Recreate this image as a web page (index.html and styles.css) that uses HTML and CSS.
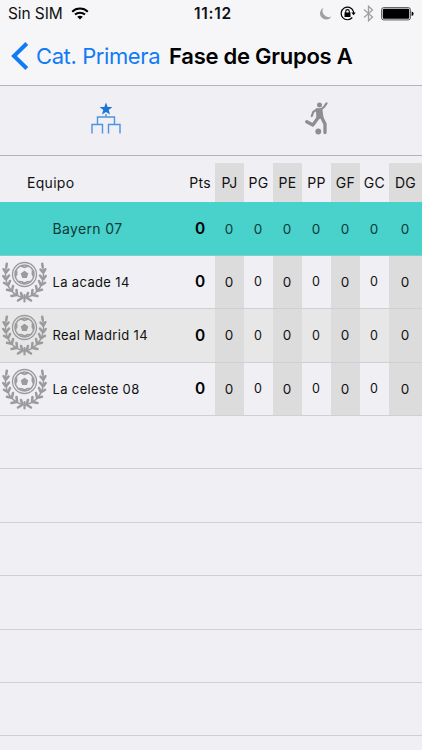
FILE: index.html
```html
<!DOCTYPE html>
<html lang="es">
<head>
    <meta charset="UTF-8">
    <meta name="viewport" content="width=device-width, initial-scale=1.0">
    <title>Fase de Grupos A</title>
    <link rel="stylesheet" href="styles.css">
</head>
<body>
    <!-- Escudo por defecto de los equipos -->
    <svg class="defs" width="0" height="0">
        <symbol id="escudo" viewBox="0 0 46 42">
            <g fill="none" stroke="#9b9b9e">
                <circle cx="22.5" cy="13.5" r="12" stroke-width="1.3"/>
                <circle cx="22.5" cy="13.5" r="9.500" stroke-width="1.6"/>
                <path d="M19 5l3.500 1.300L26 5M30.500 9.500l-.2 3.500 1.400 2.500M28.500 20.500l-3.500.2-2.500 1.500-2.500-1.500-3.500-.2M13.300 15.500l1.400-2.500-.2-3.500" stroke-width="1.600"/>
                <path d="M4.200 6C1.500 20 7 34 22.500 37C38 34 43.500 20 40.800 6" stroke-width="1.500"/>
            </g>
            <path d="M22.500 9.800l3.800 2.800-1.500 4.400h-4.600l-1.500-4.400z" fill="#9b9b9e"/>
            <g id="rama" fill="none" stroke="#9b9b9e" stroke-width="2.500" stroke-linecap="round">
                <path d="M4.300 6L4.800 2.800M3.500 11.500L1.600 8.200M4 11.500L6.500 8.500M3.500 18L1.300 15M4.300 18L7 14.500M5.500 24L2 21.800M6.300 24L8 20M9.500 29.800L5 28.800M10 29.500L11 25M14.500 34L9.500 35M15 33.500L14.500 29M20 37L16 39.500M20.300 36L19 32"/>
            </g>
            <use href="#rama" transform="matrix(-1 0 0 1 45 0)"/>
            <path d="M22.500 34v6.500" stroke="#9b9b9e" stroke-width="2.200" stroke-linecap="round"/>
        </symbol>
    </svg>

    <header class="top">
        <div class="status">
            <div class="carrier">
                <span>Sin SIM</span>
                <svg width="18" height="13" viewBox="0 0 18 13" fill="none" stroke="#000" stroke-width="2">
                    <path d="M1.200 4.700C5.500.5 12.500.5 16.800 4.700M4 7.600c2.800-2.600 7.200-2.600 10 0"/>
                    <path d="M9 12.500L6.200 9.800c1.500-1.400 4.100-1.400 5.600 0z" fill="#000" stroke="none"/>
                </svg>
            </div>
            <span class="time">11:12</span>
            <div class="indicators">
                <svg width="13" height="13" viewBox="0 0 13 13"><path d="M4.500.7A6.200 6.200 0 1 0 12.500 9.500A6.200 6.200 0 0 1 4.500.7z" fill="#a0a0a3"/></svg>
                <svg class="lock" width="16" height="15" viewBox="0 0 16 15">
                    <path d="M13.300 5A6.300 6.300 0 1 0 12.300 11.500M13.300 5l.4 2" fill="none" stroke="#000" stroke-width="1.200"/>
                    <path d="M11.300 6.500h4.400l-2.200 2.800z"/>
                    <path d="M4.500 6.500h6v4.500h-6z"/>
                    <path d="M5.700 7V5.400a1.800 1.800 0 0 1 3.600 0V7" fill="none" stroke="#000" stroke-width="1.100"/>
                </svg>
                <svg class="bluetooth" width="11" height="17" viewBox="0 0 11 17"><path d="M1 4.500l8.500 7.500-4 3.800V1.200l4 3.800L1 12.500" fill="none" stroke="#a0a0a3" stroke-width="1.300"/></svg>
                <svg class="battery" width="33" height="14" viewBox="0 0 33 14">
                    <rect x=".6" y=".6" width="28.800" height="12.300" rx="2" fill="none" stroke="#444" stroke-width=".9"/>
                    <rect x="1.800" y="1.800" width="26.400" height="9.900" rx="1"/>
                    <path d="M30.600 4.500q2 .6 2 2.300t-2 2.300z"/>
                </svg>
            </div>
        </div>
        <nav class="navbar">
            <a class="back" href="#">
                <svg width="18" height="28" viewBox="0 0 18 28"><path d="M15.800 1.500L3 14l12.800 12.500" fill="none" stroke="#117bf5" stroke-width="4"/></svg>
                <span>Cat. Primera</span>
            </a>
            <h1>Fase de Grupos A</h1>
        </nav>
    </header>

    <div class="tabs">
        <a class="tab" href="#">
            <svg width="32" height="34" viewBox="0 0 32 34">
                <path d="M16 .5l1.700 4.400 4.700.2-3.700 3 1.300 4.500-4-2.600-4 2.600 1.300-4.500-3.700-3 4.700-.2z" fill="#1b75d8"/>
                <path d="M16 12v3M7.500 22.500V15h17v7.500M2 31.500v-9h10.500v9M18.500 31.500v-9H30v9" fill="none" stroke="#4b95de" stroke-width="1.400"/>
            </svg>
        </a>
        <a class="tab" href="#">
            <svg width="24" height="34" viewBox="0 0 24 34" fill="#8e8e90">
                <circle cx="14.500" cy="3" r="2.500"/>
                <circle cx="13.300" cy="29.500" r="2.900"/>
                <path d="M10.800 6.500l6.400-.5 1.300 9.500-7 2.500z"/>
                <path d="M16.500 7l2.500-2L21.500 1.300M12 7.300L8.300 9.800 6.800 14" fill="none" stroke="#8e8e90" stroke-width="2.200" stroke-linecap="round" stroke-linejoin="round"/>
                <path d="M13.300 15.500L7.800 23 1.800 19.800M16.500 15l3.500 7v8.500" fill="none" stroke="#8e8e90" stroke-width="3.300" stroke-linecap="round" stroke-linejoin="round"/>
            </svg>
        </a>
    </div>

    <table class="standings">
        <colgroup>
            <col class="col-team">
            <col class="col-pts">
            <col class="col-stat" span="6">
            <col class="col-last">
        </colgroup>
        <thead>
            <tr><th>Equipo</th><th>Pts</th><th>PJ</th><th>PG</th><th>PE</th><th>PP</th><th>GF</th><th>GC</th><th>DG</th></tr>
        </thead>
        <tbody>
            <tr class="selected">
                <td><div class="team"><span>Bayern 07</span></div></td>
                <td>0</td><td>0</td><td>0</td><td>0</td><td>0</td><td>0</td><td>0</td><td>0</td>
            </tr>
            <tr>
                <td><div class="team"><svg class="crest"><use href="#escudo"/></svg><span>La acade 14</span></div></td>
                <td>0</td><td>0</td><td>0</td><td>0</td><td>0</td><td>0</td><td>0</td><td>0</td>
            </tr>
            <tr class="alt">
                <td><div class="team"><svg class="crest"><use href="#escudo"/></svg><span>Real Madrid 14</span></div></td>
                <td>0</td><td>0</td><td>0</td><td>0</td><td>0</td><td>0</td><td>0</td><td>0</td>
            </tr>
            <tr>
                <td><div class="team"><svg class="crest"><use href="#escudo"/></svg><span>La celeste 08</span></div></td>
                <td>0</td><td>0</td><td>0</td><td>0</td><td>0</td><td>0</td><td>0</td><td>0</td>
            </tr>
        </tbody>
    </table>

    <div class="empty-rows">
        <div></div><div></div><div></div><div></div><div></div><div></div>
    </div>
</body>
</html>
```
FILE: styles.css
```css
:root {
    --bg: #efeff4;
    --bar: #f6f6f8;
    --line: #d0d0d4;
    --blue: #117bf5;
    --teal: #49d1cc;
    --stripe: #dcdcdc;
}
* {
    box-sizing: border-box;
}
body {
    margin: 0;
    background: var(--bg);
    color: #111;
    font-family: Inter, "Liberation Sans", sans-serif;
    white-space: nowrap;
}
svg {
    display: block;
    flex: none;
}
.defs {
    position: absolute;
}
.top {
    height: 86px;
    background: var(--bar);
    border-bottom: 1px solid #b4b4b8;
}
.status {
    display: grid;
    grid-template-columns: 1fr auto 1fr;
    align-items: center;
    height: 27px;
    padding: 0 8px 0 8px;
    font-size: 15.5px;
}
.carrier {
    display: flex;
    align-items: center;
    gap: 8px;
}
.carrier span {
    letter-spacing: -0.1px;
}
.time {
    padding-left: 4px;
    font-weight: 600;
    letter-spacing: 0.7px;
}
.indicators {
    display: flex;
    align-items: center;
    justify-content: flex-end;
}
.lock {
    margin-left: 8px;
}
.bluetooth {
    margin-left: 7px;
}
.battery {
    margin-left: 7px;
}
.navbar {
    display: flex;
    align-items: center;
    height: 57px;
    padding-left: 11px;
}
.back {
    display: flex;
    align-items: center;
    width: 158px;
    gap: 7px;
    color: var(--blue);
    font-size: 22px;
    letter-spacing: -0.4px;
    text-decoration: none;
}
h1 {
    margin: 0;
    color: #000;
    font-size: 22px;
    font-weight: 600;
    letter-spacing: -0.25px;
}
.tabs {
    display: grid;
    grid-template-columns: 1fr 1fr;
    height: 70px;
    margin-bottom: 7px;
    border-bottom: 1px solid #b4b4b8;
}
.tab {
    display: flex;
    align-items: center;
    justify-content: center;
    padding-bottom: 3px;
}
.standings {
    width: 422px;
    table-layout: fixed;
    border-collapse: separate;
    border-spacing: 0;
    font-size: 14px;
}
.col-team {
    width: 185px;
}
.col-pts {
    width: 30px;
}
.col-stat {
    width: 29px;
}
.col-last {
    width: 33px;
}
th, td {
    padding: 0;
    text-align: center;
}
th {
    height: 39.4px;
    font-weight: 400;
    letter-spacing: 0.3px;
}
th:first-child {
    padding-left: 27px;
    text-align: left;
}
td {
    height: 53.4px;
    padding-right: 1px;
    border-bottom: 1px solid var(--line);
    font-size: 13.5px;
}
td:nth-child(2n+4) {
    font-size: 12.5px;
}
th:nth-child(2n+3), td:nth-child(2n+3) {
    background: var(--stripe);
}
td:nth-child(2) {
    padding-right: 0;
    color: #000;
    font-size: 15.5px;
    font-weight: 600;
}
.alt {
    background: #e7e7e7;
}
.selected td, .selected td:nth-child(2n+3) {
    background: var(--teal);
    border-bottom-color: #7fcfcd;
}
.selected td:nth-child(n+3) {
    font-size: 13.5px;
}
.selected {
    color: #0e3936;
}
.team {
    display: flex;
    align-items: center;
    padding-left: 2px;
    font-size: 13px;
    letter-spacing: 0.35px;
}
.crest {
    width: 46px;
    height: 42px;
    margin-right: 4.5px;
}
.selected .team {
    padding-left: 52.5px;
    font-size: 14px;
}
.empty-rows div {
    height: 53.4px;
    border-bottom: 1px solid var(--line);
}
```
